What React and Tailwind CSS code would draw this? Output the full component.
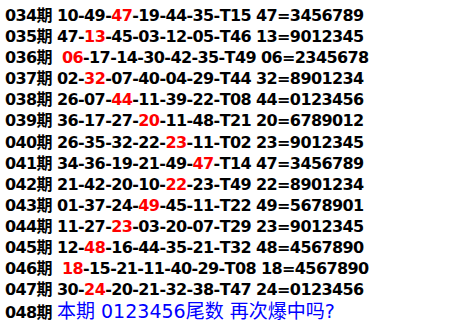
import React from 'react';

const rows = [
  ['034', '10-49-', '47', '-19-44-35-T15 47=3456789'],
  ['035', '47-', '13', '-45-03-12-05-T46 13=9012345'],
  ['036', '\u00a0', '06', '-17-14-30-42-35-T49 06=2345678'],
  ['037', '02-', '32', '-07-40-04-29-T44 32=8901234'],
  ['038', '26-07-', '44', '-11-39-22-T08 44=0123456'],
  ['039', '36-17-27-', '20', '-11-48-T21 20=6789012'],
  ['040', '26-35-32-22-', '23', '-11-T02 23=9012345'],
  ['041', '34-36-19-21-49-', '47', '-T14 47=3456789'],
  ['042', '21-42-20-10-', '22', '-23-T49 22=8901234'],
  ['043', '01-37-24-', '49', '-45-11-T22 49=5678901'],
  ['044', '11-27-', '23', '-03-20-07-T29 23=9012345'],
  ['045', '12-', '48', '-16-44-35-21-T32 48=4567890'],
  ['046', '\u00a0', '18', '-15-21-11-40-29-T08 18=4567890'],
  ['047', '30-', '24', '-20-21-32-38-T47 24=0123456'],
];

export default function App() {
  return (
    <div className="w-[472px] h-[327px] bg-white pl-[5px] pt-[5px] overflow-hidden font-['DejaVu_Sans','Noto_Sans_CJK_SC',sans-serif] text-[16px] tracking-[-0.6px] font-bold leading-[21.1px] text-black">
      {rows.map(([no, pre, hit, post]) => (
        <div key={no} className="whitespace-pre">
          {no}期 {pre}
          <span className="text-[#ff0000]">{hit}</span>
          {post}
        </div>
      ))}
      <div className="whitespace-pre mt-px">
        048期{' '}
        <span className="font-normal text-[19px] tracking-normal text-[#0000ff]">
          本期 0123456尾数 再次爆中吗?
        </span>
      </div>
    </div>
  );
}
